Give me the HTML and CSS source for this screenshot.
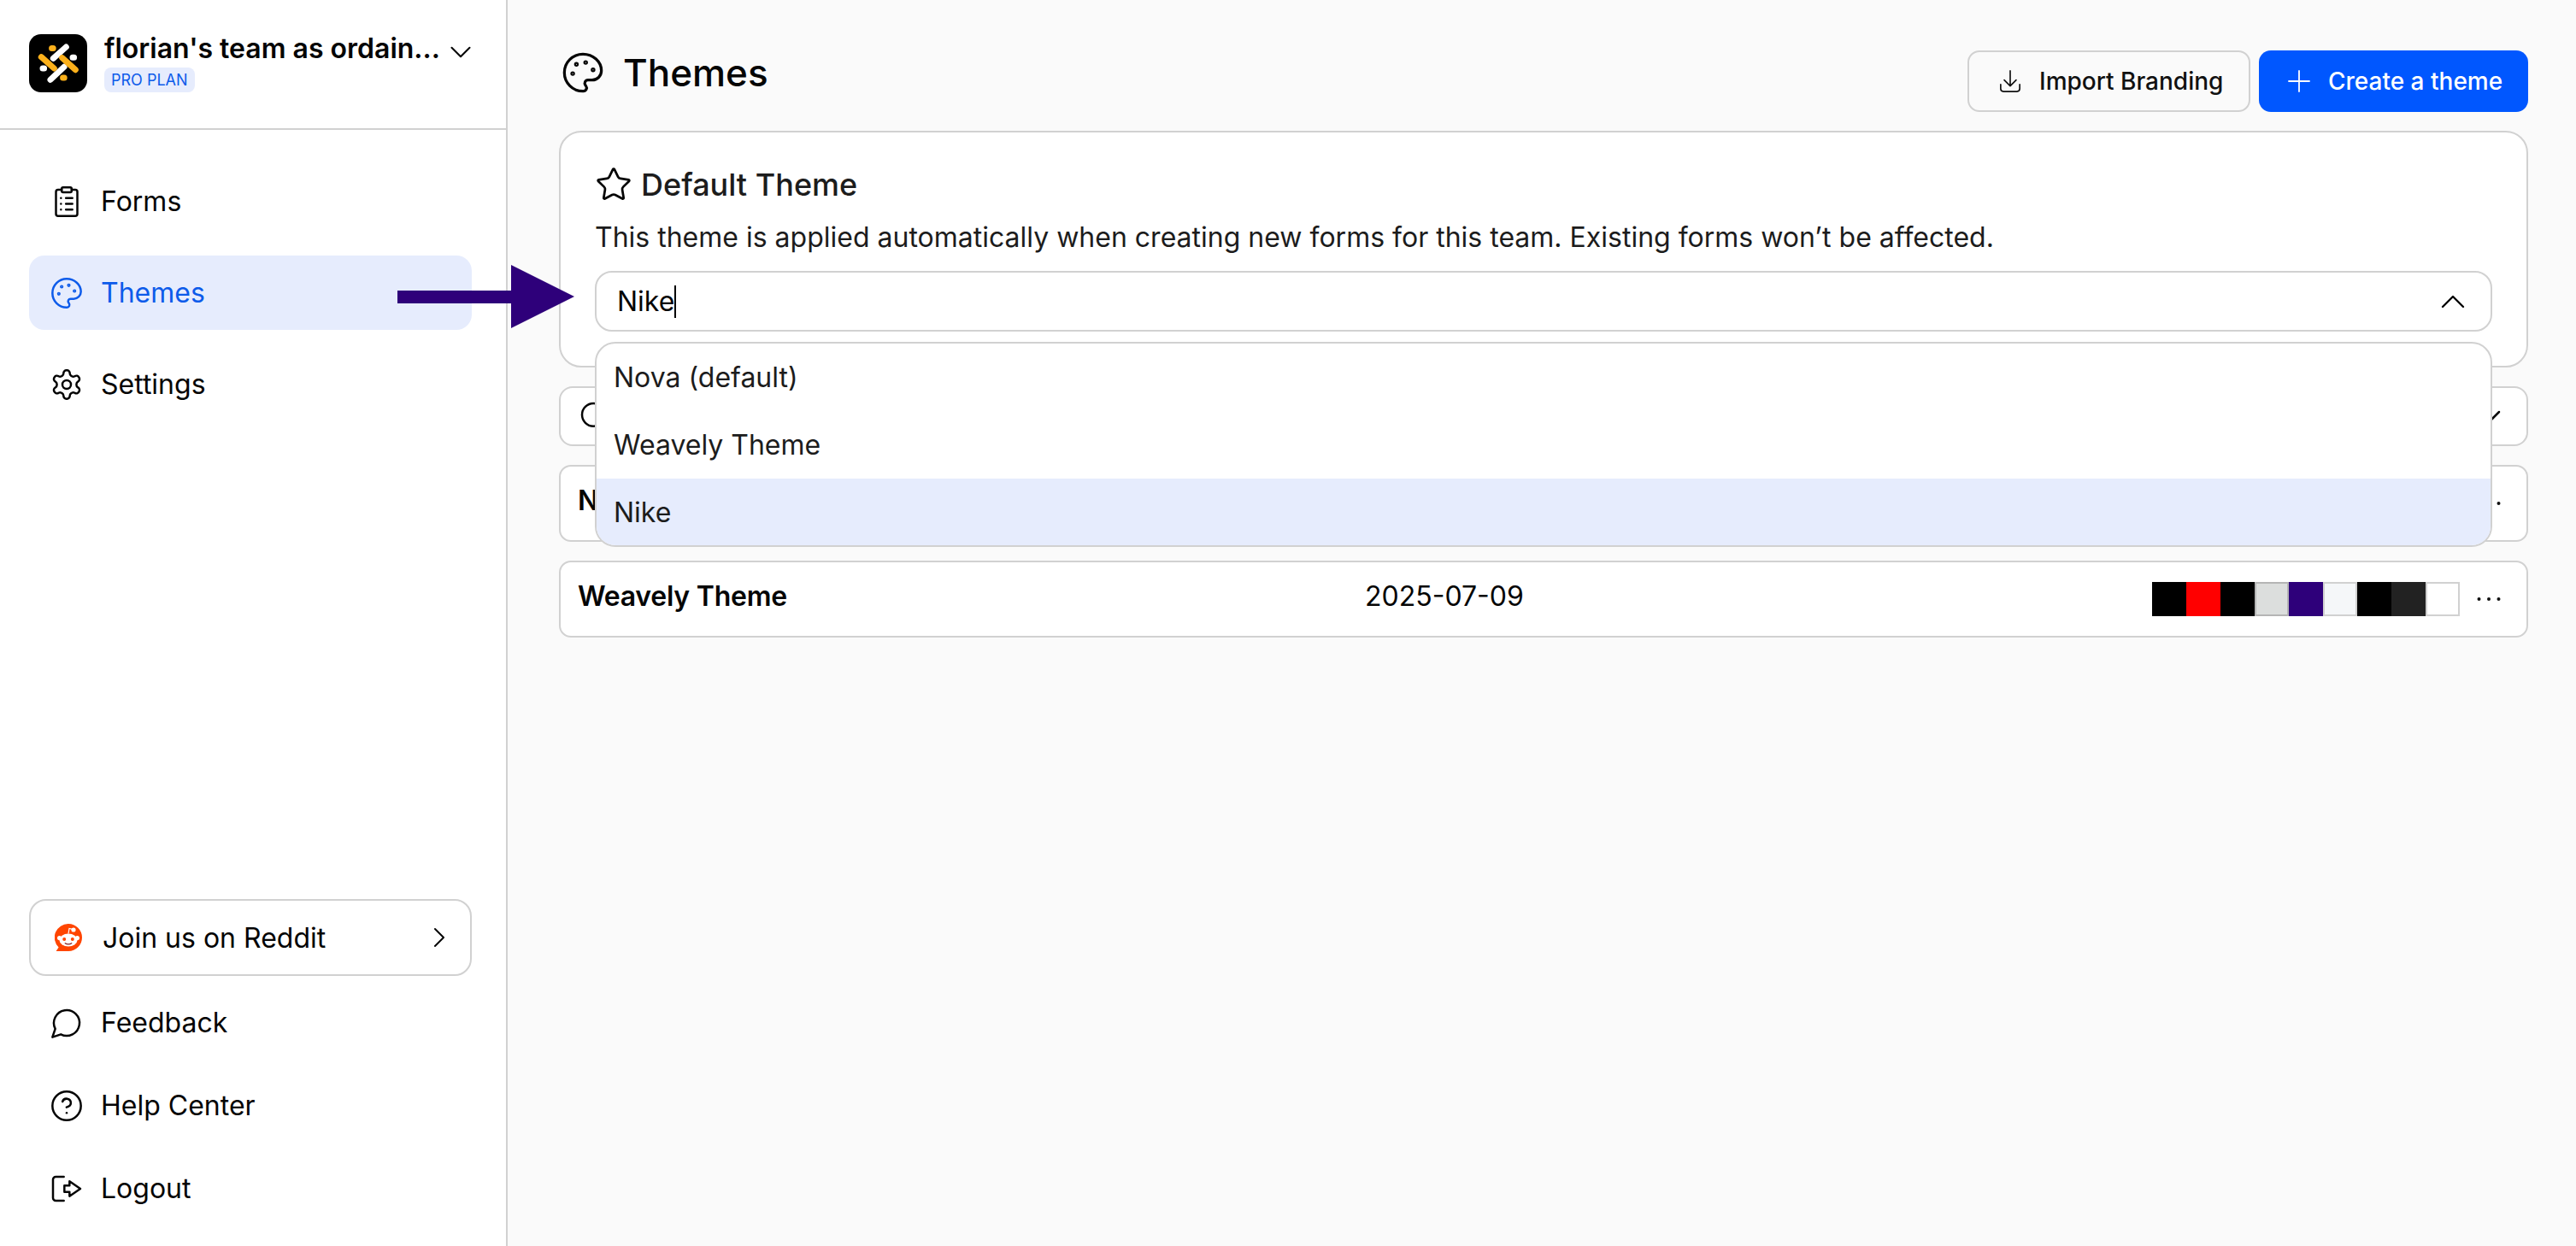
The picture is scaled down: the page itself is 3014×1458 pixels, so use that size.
FILE: index.html
```html
<!DOCTYPE html>
<html lang="en">
<head>
<meta charset="utf-8">
<title>Themes</title>
<link rel="stylesheet" href="styles.css">
</head>
<body>
<div class="app">
  <aside class="sidebar">
    <div class="team">
      <svg class="logo" viewBox="0 0 68 68"><rect width="68" height="68" rx="14" fill="#000"/><g fill="none" stroke-width="7" stroke-linecap="round"><path d="M28.300 28.300 43.300 15M25 53.300 41 38.300" stroke="#fff"/><path d="M14.300 26.700 29.300 40M38.700 27.700 54.300 41.700" stroke="#fbb01b"/><path d="M26.600 16.400h1.600M39.600 51h1.600" stroke="#fbb01b"/><path d="M16 40h1.600M51 27.300h1.600" stroke="#fff"/></g></svg>
      <div class="team-text">
        <div class="team-name">florian's team as ordain...</div>
        <span class="badge">PRO PLAN</span>
      </div>
      <svg class="icon thin team-chevron" viewBox="0 0 24 24"><path d="m6 9 6 6 6-6"/></svg>
    </div>
    <nav class="nav">
      <a class="nav-item">
        <svg class="icon" viewBox="0 0 24 24"><rect x="8.500" y="2" width="7" height="3.400" rx="1"/><path d="M15.500 3.600H18a1.500 1.500 0 0 1 1.500 1.500v15.400A1.500 1.500 0 0 1 18 22H6a1.500 1.500 0 0 1-1.500-1.500V5.100A1.500 1.500 0 0 1 6 3.600h2.500"/><path d="M11.500 9.500h4.500M11.500 13.500h4.500M11.500 17.500h4.500M8 9.500h.01M8 13.500h.01M8 17.500h.01"/></svg>
        <span>Forms</span>
      </a>
      <a class="nav-item active">
        <svg class="icon" viewBox="0 0 24 24"><path d="M12 22a1 1 0 0 1 0-20 10 9 0 0 1 10 9 5 5 0 0 1-5 5h-2.250a1.750 1.750 0 0 0-1.400 2.800l.3.4a1.750 1.750 0 0 1-1.400 2.800z"/><circle cx="13.500" cy="6.500" r=".5"/><circle cx="17.500" cy="10.500" r=".5"/><circle cx="6.500" cy="12.500" r=".5"/><circle cx="8.500" cy="7.500" r=".5"/></svg>
        <span>Themes</span>
      </a>
      <a class="nav-item">
        <svg class="icon" viewBox="0 0 24 24"><path d="M12.220 2h-.44a2 2 0 0 0-2 2v.18a2 2 0 0 1-1 1.730l-.43.25a2 2 0 0 1-2 0l-.15-.08a2 2 0 0 0-2.730.73l-.22.38a2 2 0 0 0 .73 2.730l.15.1a2 2 0 0 1 1 1.720v.51a2 2 0 0 1-1 1.740l-.15.09a2 2 0 0 0-.73 2.730l.22.38a2 2 0 0 0 2.730.73l.15-.08a2 2 0 0 1 2 0l.43.25a2 2 0 0 1 1 1.730V20a2 2 0 0 0 2 2h.44a2 2 0 0 0 2-2v-.18a2 2 0 0 1 1-1.730l.43-.25a2 2 0 0 1 2 0l.15.08a2 2 0 0 0 2.730-.73l.22-.39a2 2 0 0 0-.73-2.730l-.15-.08a2 2 0 0 1-1-1.740v-.5a2 2 0 0 1 1-1.740l.15-.09a2 2 0 0 0 .73-2.730l-.22-.38a2 2 0 0 0-2.730-.73l-.15.08a2 2 0 0 1-2 0l-.43-.25a2 2 0 0 1-1-1.730V4a2 2 0 0 0-2-2z"/><circle cx="12" cy="12" r="3"/></svg>
        <span>Settings</span>
      </a>
    </nav>
    <div class="side-bottom">
      <a class="reddit">
        <svg class="reddit-icon" viewBox="0 0 32 32"><path d="M16 0a16 16 0 0 1 0 32H1.600l3-4.600A16 16 0 0 1 16 0z" fill="#ff4500"/><ellipse cx="16" cy="19" rx="10.500" ry="7.600" fill="#fff"/><circle cx="5.600" cy="16.600" r="2.600" fill="#fff"/><circle cx="26.400" cy="16.600" r="2.600" fill="#fff"/><path d="M16 11.500 17 5.500l5 1.200" fill="none" stroke="#fff" stroke-width="1.200"/><circle cx="22" cy="7" r="2.600" fill="#fff"/><circle cx="11.200" cy="18" r="2" fill="#ff4500"/><circle cx="20.800" cy="18" r="2" fill="#ff4500"/><path d="M11.800 22.400c2.400 1.800 6 1.800 8.400 0" fill="none" stroke="#842123" stroke-width="1.200"/></svg>
        <span class="reddit-label">Join us on Reddit</span>
        <svg class="icon thin reddit-chevron" viewBox="0 0 24 24"><path d="m9 18 6-6-6-6"/></svg>
      </a>
      <a class="side-link">
        <svg class="icon" viewBox="0 0 24 24"><path d="M7.900 20A9 9 0 1 0 4 16.100L2 22Z"/></svg>
        <span>Feedback</span>
      </a>
      <a class="side-link">
        <svg class="icon" viewBox="0 0 24 24"><circle cx="12" cy="12" r="10"/><path d="M9.090 9a3 3 0 0 1 5.830 1c0 2-3 3-3 3"/><path d="M12 17h.01"/></svg>
        <span>Help Center</span>
      </a>
      <a class="side-link">
        <svg class="icon" viewBox="0 0 24 24"><path d="M10 3.600H4.400a2 2 0 0 0-2 2v12.800a2 2 0 0 0 2 2H10"/><path d="M14 6.800 21.600 12 14 17.200v-3h-3.600V9.800H14z"/></svg>
        <span>Logout</span>
      </a>
    </div>
  </aside>

  <main class="main">
    <header class="page-head">
      <div class="page-title">
        <svg class="icon title-icon" viewBox="0 0 24 24"><path d="M12 22a1 1 0 0 1 0-20 10 9 0 0 1 10 9 5 5 0 0 1-5 5h-2.250a1.750 1.750 0 0 0-1.400 2.800l.3.4a1.750 1.750 0 0 1-1.400 2.800z"/><circle cx="13.500" cy="6.500" r=".5"/><circle cx="17.500" cy="10.500" r=".5"/><circle cx="6.500" cy="12.500" r=".5"/><circle cx="8.500" cy="7.500" r=".5"/></svg>
        <h1>Themes</h1>
      </div>
      <div class="actions">
        <button class="btn btn-outline">
          <svg class="icon btn-icon" viewBox="0 0 28 30"><path d="M14 2v19M6.500 13.500 14 21l7.500-7.500M2 19v5.500A3.500 3.500 0 0 0 5.500 28h17a3.500 3.500 0 0 0 3.500-3.500V19"/></svg>
          <span>Import Branding</span>
        </button>
        <button class="btn btn-primary">
          <svg class="icon btn-icon plus" viewBox="0 0 26 26"><path d="M13 1v24M1 13h24"/></svg>
          <span>Create a theme</span>
        </button>
      </div>
    </header>

    <section class="card">
      <div class="card-head">
        <svg class="icon star" viewBox="0 0 24 24"><path d="M11.525 2.295a.53.53 0 0 1 .95 0l2.310 4.679a2.123 2.123 0 0 0 1.595 1.160l5.166.756a.53.53 0 0 1 .294.904l-3.736 3.638a2.123 2.123 0 0 0-.611 1.878l.882 5.140a.53.53 0 0 1-.771.56l-4.618-2.428a2.122 2.122 0 0 0-1.973 0L6.396 21.010a.53.53 0 0 1-.77-.56l.881-5.139a2.122 2.122 0 0 0-.611-1.879L2.160 9.795a.53.53 0 0 1 .294-.906l5.165-.755a2.122 2.122 0 0 0 1.597-1.160z"/></svg>
        <h2>Default Theme</h2>
      </div>
      <p class="card-desc">This theme is applied automatically when creating new forms for this team. Existing forms won’t be affected.</p>
      <div class="select">
        <div class="select-box">
          <span class="select-value">Nike</span><span class="caret"></span>
          <svg class="icon thin select-chevron" viewBox="0 0 24 24"><path d="m18 15-6-6-6 6"/></svg>
        </div>
        <ul class="menu">
          <li class="menu-item">Nova (default)</li>
          <li class="menu-item">Weavely Theme</li>
          <li class="menu-item selected">Nike</li>
        </ul>
      </div>
    </section>

    <div class="search-row">
      <svg class="icon search-icon" viewBox="0 0 24 24"><circle cx="11" cy="11" r="8"/><path d="m21 21-4.300-4.300"/></svg>
      <svg class="icon search-chevron" viewBox="0 0 24 24"><path d="m6 9 6 6 6-6"/></svg>
    </div>

    <div class="theme-row">
      <span class="theme-name">Nike</span>
      <span class="theme-date">2025-07-09</span>
      <div class="swatches">
        <i class="swatch s-black"></i><i class="swatch s-red"></i><i class="swatch s-black"></i><i class="swatch s-grey"></i><i class="swatch s-purple"></i><i class="swatch s-pale"></i><i class="swatch s-black"></i><i class="swatch s-dark"></i><i class="swatch s-white"></i>
      </div>
      <svg class="more" viewBox="0 0 40 40"><circle cx="8.500" cy="20" r="2"/><circle cx="20" cy="20" r="2"/><circle cx="31.500" cy="20" r="2"/></svg>
    </div>

    <div class="theme-row">
      <span class="theme-name">Weavely Theme</span>
      <span class="theme-date">2025-07-09</span>
      <div class="swatches">
        <i class="swatch s-black"></i><i class="swatch s-red"></i><i class="swatch s-black"></i><i class="swatch s-grey"></i><i class="swatch s-purple"></i><i class="swatch s-pale"></i><i class="swatch s-black"></i><i class="swatch s-dark"></i><i class="swatch s-white"></i>
      </div>
      <svg class="more" viewBox="0 0 40 40"><circle cx="8.500" cy="20" r="2"/><circle cx="20" cy="20" r="2"/><circle cx="31.500" cy="20" r="2"/></svg>
    </div>
  </main>

  <svg class="arrow" viewBox="0 0 207 74"><path d="M0 30h133V0l74 37-74 37V45H0z"/></svg>
</div>
</body>
</html>
```
FILE: styles.css
```css
* { box-sizing: border-box; }

html, body {
  margin: 0;
  height: 100%;
}

body {
  font-family: Inter, "Noto Sans", sans-serif;
  color: #050505;
  background: #fafafa;
  font-size: 32px;
  overflow: hidden;
}

.app {
  position: relative;
  display: flex;
  width: 3014px;
  height: 1458px;
}

.icon {
  width: 40px;
  height: 40px;
  flex: none;
  fill: none;
  stroke: currentColor;
  stroke-width: 1.5;
  stroke-linecap: round;
  stroke-linejoin: round;
}

.icon.thin {
  stroke-width: 1.2;
}

/* Sidebar */
.sidebar {
  width: 594px;
  flex: none;
  display: flex;
  flex-direction: column;
  background: #fff;
  border-right: 2px solid #d1d1d1;
}

.team {
  display: flex;
  align-items: flex-start;
  height: 152px;
  padding: 40px 32px 0 34px;
  border-bottom: 2px solid #d1d1d1;
}

.logo {
  width: 68px;
  height: 68px;
  flex: none;
}

.team-text {
  margin-left: 20px;
  flex: 1;
  min-width: 0;
}

.team-name {
  font-size: 32px;
  font-weight: 600;
  line-height: 36px;
  margin-top: -1px;
  white-space: nowrap;
}

.badge {
  display: inline-block;
  margin-top: 4px;
  padding: 0 8px;
  height: 29px;
  line-height: 29px;
  border-radius: 8px;
  background: #e6ecfd;
  color: #0d5bea;
  font-size: 18px;
  vertical-align: top;
}

.team-chevron {
  width: 42px;
  height: 42px;
}

.nav {
  display: flex;
  flex-direction: column;
  gap: 20px;
  padding: 40px 40px 0 34px;
}

.nav-item {
  display: flex;
  align-items: center;
  gap: 20px;
  height: 87px;
  padding-left: 24px;
  border-radius: 18px;
}

.nav-item.active {
  background: #e6ecfd;
  color: #0d5bea;
}

.side-bottom {
  margin-top: auto;
  padding: 0 40px 19px 34px;
}

.reddit {
  display: flex;
  align-items: center;
  height: 90px;
  margin-bottom: 6px;
  padding-left: 28px;
  border: 2px solid #d1d1d1;
  border-radius: 20px;
}

.reddit-icon {
  width: 32px;
  height: 32px;
  flex: none;
}

.reddit-label {
  margin-left: 24px;
  flex: 1;
}

.reddit-chevron {
  margin-right: 16px;
}

.side-link {
  display: flex;
  align-items: center;
  gap: 20px;
  height: 97px;
  padding-left: 24px;
}

/* Main */
.main {
  flex: 1;
  min-width: 0;
  padding: 59px 56px 0 60px;
  display: flex;
  flex-direction: column;
  gap: 22px;
}

.page-head {
  display: flex;
  justify-content: space-between;
  align-items: flex-start;
  height: 72px;
}

.page-title {
  display: flex;
  align-items: center;
  gap: 21px;
  height: 52px;
  padding-left: 2px;
}

.title-icon {
  width: 52px;
  height: 52px;
}

.page-title h1 {
  margin: 0;
  font-size: 44px;
  font-weight: 500;
  line-height: 52px;
}

.actions {
  display: flex;
  gap: 10px;
}

.btn {
  display: flex;
  align-items: center;
  height: 72px;
  border-radius: 14px;
  font-family: inherit;
  font-size: 28px;
  font-weight: 500;
}

.btn-icon {
  width: 26px;
  height: 28px;
  stroke-width: 1.8;
}

.btn-outline {
  gap: 21px;
  width: 331px;
  padding: 0 0 0 35px;
  background: transparent;
  color: #111;
  border: 2px solid #d1d1d1;
}

.btn-primary {
  gap: 21px;
  width: 315px;
  padding: 0 0 0 34px;
  background: #0057ff;
  color: #fff;
  border: 0;
}

.plus {
  height: 26px;
}

.card {
  background: #fff;
  border: 2px solid #d1d1d1;
  border-radius: 26px;
  padding: 39px 40px 40px;
  height: 277px;
}

.card-head {
  display: flex;
  align-items: center;
  gap: 10px;
  height: 44px;
}

.star {
  width: 44px;
  height: 44px;
}

.card-head h2 {
  margin: 0;
  font-size: 36px;
  font-weight: 500;
  line-height: 44px;
  color: #1c1c1c;
}

.card-desc {
  margin: 18px 0 0;
  line-height: 44px;
  color: #1c1c1c;
}

.select {
  position: relative;
  margin-top: 17px;
  z-index: 2;
}

.select-box {
  display: flex;
  align-items: center;
  height: 71px;
  padding: 0 20px 0 24px;
  background: #fff;
  border: 2px solid #d1d1d1;
  border-radius: 20px;
}

.caret {
  width: 2px;
  height: 38px;
  margin-left: 0;
  background: #000;
}

.select-chevron {
  width: 48px;
  height: 48px;
  margin-left: auto;
}

.menu {
  position: absolute;
  top: 83px;
  left: 0;
  right: 0;
  margin: 0;
  padding: 0;
  list-style: none;
  background: #fff;
  border: 2px solid #d1d1d1;
  border-radius: 24px;
  overflow: hidden;
}

.menu-item {
  height: 79px;
  line-height: 79px;
  padding-left: 20px;
  color: #1c1c1c;
}

.menu-item.selected {
  height: 78px;
  background: #e6ecfd;
}

.search-row {
  display: flex;
  align-items: center;
  justify-content: space-between;
  height: 70px;
  padding: 0 22px 0 20px;
  background: #fff;
  border: 2px solid #d1d1d1;
  border-radius: 16px;
}

.theme-row {
  display: grid;
  grid-template-columns: 921px 1fr auto auto;
  align-items: center;
  height: 90px;
  padding: 0 24px 0 20px;
  background: #fff;
  border: 2px solid #d1d1d1;
  border-radius: 14px;
}

.theme-name {
  font-weight: 600;
  letter-spacing: -0.25px;
  margin-top: -8px;
}

.theme-date {
  margin-top: -8px;
}

.swatches {
  display: flex;
}

.swatch {
  display: block;
  width: 40px;
  height: 40px;
}

.s-black { background: #000; }
.s-red { background: #ff0000; }
.s-grey { background: #dcdedd; border: 2px solid #b5b5b5; }
.s-purple { background: #2e007a; }
.s-pale { background: #f5f7f9; border: 2px solid #d1d1d1; }
.s-dark { background: #222; }
.s-white { background: #fff; border: 2px solid #d1d1d1; }

.more {
  width: 40px;
  height: 40px;
  margin-left: 14px;
  fill: #111;
}

/* Annotation arrow, laid over the page */
.arrow {
  position: absolute;
  left: 465px;
  top: 310px;
  width: 207px;
  height: 74px;
  fill: #2e007a;
  z-index: 5;
}
```
